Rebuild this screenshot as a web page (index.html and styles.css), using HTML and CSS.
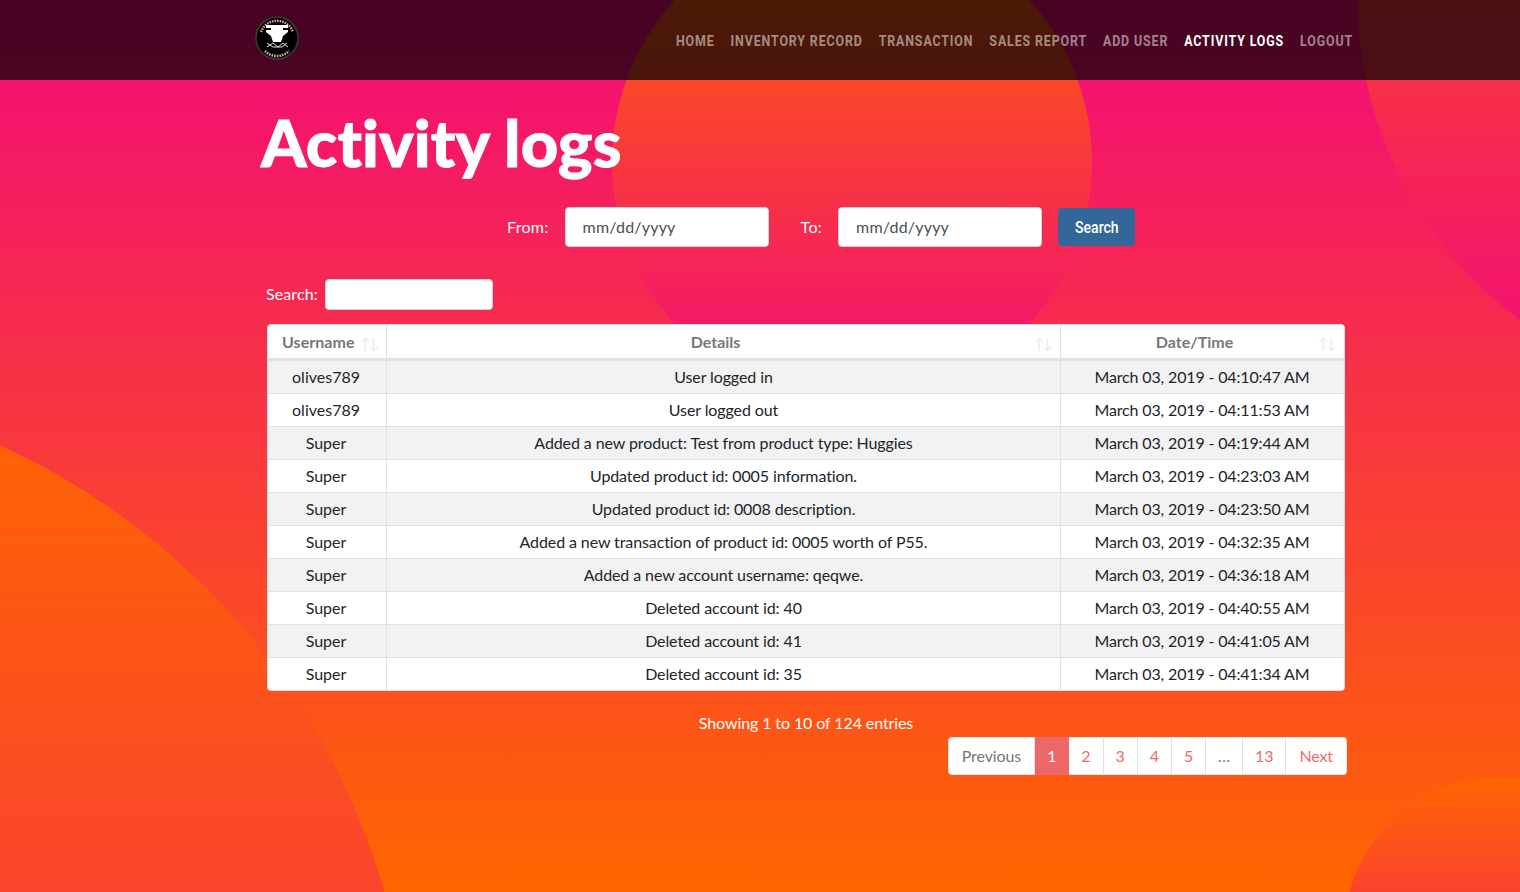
FILE: index.html
```html
<!DOCTYPE html>
<html lang="en">
<head>
    <meta charset="UTF-8">
    <title>Activity logs</title>
    <link rel="stylesheet" href="styles.css">
</head>
<body>
    <svg class="shapes" width="1520" height="892" viewBox="0 0 1520 892">
        <defs>
            <linearGradient id="shape-fill" x1="0" y1="0" x2="0" y2="1">
                <stop offset="0" stop-color="#ff6600"/>
                <stop offset="1" stop-color="#f20a7a"/>
            </linearGradient>
        </defs>
        <circle cx="852" cy="162" r="240" fill="url(#shape-fill)"/>
        <circle cx="1755" cy="0" r="397" fill="url(#shape-fill)"/>
        <circle cx="-289" cy="1083" r="700" fill="url(#shape-fill)"/>
        <circle cx="1500" cy="933" r="156" fill="url(#shape-fill)"/>
    </svg>

    <nav class="navbar">
        <a href="#" class="brand">
            <svg width="46" height="46" viewBox="0 0 46 46">
                <circle cx="23" cy="23" r="21" fill="#000" stroke="#3a3a3a" stroke-width="1.5"/>
                <path d="M7 17A17 17 0 0 1 39 17" fill="none" stroke="#d9a0a0" stroke-width="2.4" stroke-dasharray="1.6 1"/>
                <path d="M11 36A17 17 0 0 0 35 36" fill="none" stroke="#d9a0a0" stroke-width="2.6" stroke-dasharray="1.6 1"/>
                <path d="M12 10H34V13H29V15H34V17L29 21L27 27H19L17 21L12 17V15H17V13H12Z" fill="#fff"/>
                <path d="M13 32L19 28L24 32L29 28L34 32M13 28L19 32H28L33 28" fill="none" stroke="#ddd" stroke-width="1"/>
            </svg>
        </a>
        <ul class="nav-links">
            <li><a href="#">Home</a></li>
            <li><a href="#">Inventory Record</a></li>
            <li><a href="#">Transaction</a></li>
            <li><a href="#">Sales Report</a></li>
            <li><a href="#">Add User</a></li>
            <li><a href="#" class="active">Activity Logs</a></li>
            <li><a href="#">Logout</a></li>
        </ul>
    </nav>

    <main class="content">
        <h1>Activity logs</h1>

        <form class="date-filter">
            <label for="from-date">From:</label>
            <input type="text" id="from-date" placeholder="mm/dd/yyyy">
            <label for="to-date" class="to-label">To:</label>
            <input type="text" id="to-date" placeholder="mm/dd/yyyy">
            <button type="button" class="btn"><span>Search</span></button>
        </form>

        <div class="table-search">
            <label for="table-search">Search:</label>
            <input type="text" id="table-search">
        </div>

        <table class="logs">
            <thead>
                <tr>
                    <th class="col-user">Username<span class="sort">↑↓</span></th>
                    <th class="col-details">Details<span class="sort">↑↓</span></th>
                    <th class="col-date">Date/Time<span class="sort">↑↓</span></th>
                </tr>
            </thead>
            <tbody>
                <tr><td>olives789</td><td>User logged in</td><td>March 03, 2019 - 04:10:47 AM</td></tr>
                <tr><td>olives789</td><td>User logged out</td><td>March 03, 2019 - 04:11:53 AM</td></tr>
                <tr><td>Super</td><td>Added a new product: Test from product type: Huggies</td><td>March 03, 2019 - 04:19:44 AM</td></tr>
                <tr><td>Super</td><td>Updated product id: 0005 information.</td><td>March 03, 2019 - 04:23:03 AM</td></tr>
                <tr><td>Super</td><td>Updated product id: 0008 description.</td><td>March 03, 2019 - 04:23:50 AM</td></tr>
                <tr><td>Super</td><td>Added a new transaction of product id: 0005 worth of P55.</td><td>March 03, 2019 - 04:32:35 AM</td></tr>
                <tr><td>Super</td><td>Added a new account username: qeqwe.</td><td>March 03, 2019 - 04:36:18 AM</td></tr>
                <tr><td>Super</td><td>Deleted account id: 40</td><td>March 03, 2019 - 04:40:55 AM</td></tr>
                <tr><td>Super</td><td>Deleted account id: 41</td><td>March 03, 2019 - 04:41:05 AM</td></tr>
                <tr><td>Super</td><td>Deleted account id: 35</td><td>March 03, 2019 - 04:41:34 AM</td></tr>
            </tbody>
        </table>

        <p class="table-info">Showing 1 to 10 of 124 entries</p>

        <ul class="pagination">
            <li class="muted"><a href="#">Previous</a></li>
            <li class="current num"><a href="#">1</a></li>
            <li class="num"><a href="#">2</a></li>
            <li class="num"><a href="#">3</a></li>
            <li class="num"><a href="#">4</a></li>
            <li class="num"><a href="#">5</a></li>
            <li class="muted num"><a href="#">…</a></li>
            <li class="num"><a href="#">13</a></li>
            <li><a href="#">Next</a></li>
        </ul>
    </main>
</body>
</html>
```

FILE: styles.css
```css
body {
    font-family: 'Lato', sans-serif;
    margin: 0;
    padding: 0;
    height: 892px;
    overflow: hidden;
    position: relative;
    background: linear-gradient(180deg, #f20a7a 0%, #ff6600 100%);
    color: #212529;
}

/* background circles */
.shapes {
    position: absolute;
    left: 0;
    top: 0;
    display: block;
}

.navbar {
    position: relative;
    height: 80px;
    background: rgba(0, 0, 0, 0.7);
    display: flex;
    align-items: center;
    justify-content: space-between;
    padding: 0 167px 0 254px;
}

.brand {
    display: flex;
    margin-top: -4px;
}

.nav-links {
    list-style: none;
    margin: 0;
    padding: 0;
    display: flex;
    gap: 18px;
    transform: scaleX(0.885);
    transform-origin: right center;
    position: relative;
    top: -1px;
}

.nav-links a {
    font-family: 'Roboto', sans-serif;
    font-weight: 700;
    font-size: 14px;
    letter-spacing: 1px;
    text-transform: uppercase;
    text-decoration: none;
    color: rgba(255, 255, 255, 0.5);
}

.nav-links a.active {
    color: #fff;
}

.content {
    position: relative;
    width: 1080px;
    margin-left: 267px;
}

h1 {
    margin: 24px 0 0 -6px;
    font-size: 65px;
    line-height: 76px;
    font-weight: 900;
    letter-spacing: 0.1px;
    -webkit-text-stroke: 0.9px #fff;
    color: #fff;
}

.date-filter {
    display: flex;
    align-items: center;
    margin-top: 27px;
    padding-left: 240px;
    font-size: 16px;
    color: #fff;
}

.date-filter label {
    margin-right: 16px;
    letter-spacing: 0.3px;
    position: relative;
    top: -1px;
}

.date-filter .to-label {
    margin-left: 32px;
}

.date-filter input {
    width: 204px;
    height: 40px;
    box-sizing: border-box;
    padding: 0 17px 2px;
    border: 1px solid #ced4da;
    border-radius: 4px;
    font-family: 'Lato', sans-serif;
    font-size: 16px;
    letter-spacing: 0.2px;
    background: #fff;
}

.date-filter input::placeholder {
    color: #495057;
    opacity: 1;
}

.btn {
    margin-left: 16px;
    width: 77px;
    height: 38px;
    padding: 1px 0 0;
    border: 0;
    border-radius: 4px;
    background-color: #336699;
    color: #fff;
    font-family: 'Roboto', sans-serif;
    font-weight: 500;
    font-size: 16px;
}

.btn span {
    display: inline-block;
    transform: scaleX(0.88);
}

.table-search {
    display: flex;
    align-items: center;
    margin: 32px 0 14px -1px;
    font-size: 16px;
    line-height: 19px;
    color: #fff;
}

.table-search label {
    margin-right: 7px;
    letter-spacing: 0.1px;
    position: relative;
    top: -1px;
}

.table-search input {
    width: 168px;
    height: 31px;
    box-sizing: border-box;
    border: 1px solid #ced4da;
    border-radius: 4px;
    background: #fff;
}

table.logs {
    width: 1078px;
    table-layout: fixed;
    border-collapse: separate;
    border-spacing: 0;
    background: #fff;
    border: 1px solid #dee2e6;
    border-radius: 4px;
    font-size: 16px;
    letter-spacing: -0.1px;
}

.logs th, .logs td {
    padding: 0;
    text-align: center;
    border-left: 1px solid #dee2e6;
    box-sizing: border-box;
}

.logs th:first-child, .logs td:first-child {
    border-left: 0;
}

.logs th {
    position: relative;
    height: 36px;
    padding-right: 16px;
    padding-bottom: 1px;
    color: #777;
    font-weight: 700;
    letter-spacing: 0;
    border-bottom: 3px solid #dee2e6;
}

.logs th.col-user {
    width: 118px;
    padding-left: 14px;
    padding-right: 0;
    text-align: left;
    letter-spacing: 0.04px;
}

.logs th.col-details {
    width: 674px;
}

.sort {
    position: absolute;
    right: 10px;
    top: 9px;
    font-size: 15px;
    font-weight: 400;
    letter-spacing: -3px;
    color: #e4ecef;
}

.logs td {
    height: 33px;
    padding-bottom: 2px;
    border-top: 1px solid #dee2e6;
}

.logs td:first-child {
    letter-spacing: 0;
    padding-right: 2px;
}

.logs td:last-child {
    letter-spacing: -0.15px;
    padding-right: 1px;
}

.logs tbody tr:first-child td {
    border-top: 0;
    height: 32px;
}

.logs tbody tr:nth-child(odd) td {
    background: #f2f2f2;
}

.table-info {
    margin: 22px 0 0;
    padding-right: 2px;
    text-align: center;
    font-size: 16px;
    line-height: 19px;
    letter-spacing: -0.1px;
    color: #fff;
}

.pagination {
    list-style: none;
    margin: 5px 0 0;
    padding: 0;
    display: flex;
    justify-content: flex-end;
}

.pagination a {
    display: block;
    height: 36px;
    line-height: 36px;
    padding: 0 13px;
    background: #fff;
    border: 1px solid #dee2e6;
    border-left: 0;
    color: #ef6a6a;
    text-decoration: none;
    font-size: 16px;
    letter-spacing: -0.1px;
}

.pagination .num a {
    padding: 0 12px;
}

.pagination li:first-child a {
    border-left: 1px solid #dee2e6;
    border-radius: 4px 0 0 4px;
}

.pagination li:last-child a {
    border-radius: 0 4px 4px 0;
}

.pagination .muted a {
    color: #777;
}

.pagination .current a {
    background: #ec6767;
    border-color: #ec6767;
    color: #fff;
}
```
